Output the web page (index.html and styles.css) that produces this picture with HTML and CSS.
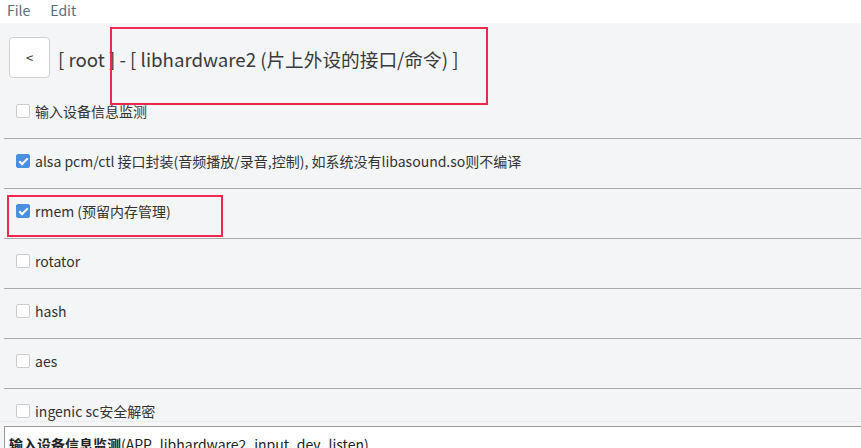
FILE: index.html
```html
<!DOCTYPE html>
<html lang="en">

<head>
    <meta charset="UTF-8">
    <meta name="viewport" content="width=device-width, initial-scale=1.0">
    <title>libhardware2</title>
    <link rel="stylesheet" href="styles.css">
</head>

<body>
    <div class="menubar">
        <span class="menu-item">File</span>
        <span class="menu-item">Edit</span>
    </div>
    <div class="page">
        <div class="header">
            <button class="back-button">&lt;</button>
            <h1 class="title">[ root ] - [ libhardware2 (片上外设的接口/命令) ]</h1>
        </div>
        <div class="option-list">
            <div class="option-row">
                <span class="checkbox"></span>
                <span class="option-label">输入设备信息监测</span>
            </div>
            <div class="option-row">
                <span class="checkbox checked"></span>
                <span class="option-label">alsa pcm/ctl 接口封装(音频播放/录音,控制), 如系统没有libasound.so则不编译</span>
            </div>
            <div class="option-row">
                <span class="checkbox checked"></span>
                <span class="option-label">rmem (预留内存管理)</span>
            </div>
            <div class="option-row">
                <span class="checkbox"></span>
                <span class="option-label">rotator</span>
            </div>
            <div class="option-row">
                <span class="checkbox"></span>
                <span class="option-label">hash</span>
            </div>
            <div class="option-row">
                <span class="checkbox"></span>
                <span class="option-label">aes</span>
            </div>
            <div class="option-row">
                <span class="checkbox"></span>
                <span class="option-label">ingenic sc安全解密</span>
            </div>
        </div>
        <div class="help-panel">
            <div class="help-box"><b>输入设备信息监测</b>(APP_libhardware2_input_dev_listen)</div>
        </div>
    </div>

    <!-- annotation boxes drawn over the screenshot -->
    <div class="mark mark-title"></div>
    <div class="mark mark-rmem"></div>
</body>

</html>
```

FILE: styles.css
```css
html,
body {
    margin: 0;
    padding: 0;
    height: 448px;
    overflow: hidden;
}

body {
    font-family: 'Noto Sans CJK SC', 'Noto Sans', sans-serif;
    color: #333;
    background-color: #f4f5f7;
    position: relative;
    display: flex;
    flex-direction: column;
}

.menubar {
    height: 23px;
    background-color: #fff;
    display: flex;
    align-items: flex-start;
    gap: 20px;
    padding-left: 7px;
    font-size: 14px;
    line-height: 20px;
    color: #5b6b7d;
    flex-shrink: 0;
}

.page {
    flex: 1;
    display: flex;
    flex-direction: column;
    min-height: 0;
}

.header {
    display: flex;
    align-items: flex-start;
    gap: 8px;
    padding: 14px 0 0 9px;
    height: 52px;
    flex-shrink: 0;
}

.back-button {
    width: 41px;
    height: 41px;
    background-color: #fff;
    border: 1px solid #d0d0d0;
    border-radius: 4px;
    font-family: 'Noto Sans CJK SC', sans-serif;
    font-size: 13px;
    color: #333;
    padding: 0;
}

.title {
    margin: 0;
    font-size: 14pt;
    font-weight: normal;
    line-height: 44px;
    color: #3a3a3a;
}

.option-list {
    flex: 1;
    min-height: 0;
    overflow: hidden;
    margin-left: 4px;
}

.option-row {
    display: flex;
    align-items: center;
    gap: 5px;
    height: 20px;
    padding: 12px 0 17px 12px;
    border-bottom: 1px solid #aaa;
    font-size: 14px;
}

.checkbox {
    width: 14px;
    height: 14px;
    box-sizing: border-box;
    border: 1px solid #ccc;
    border-radius: 2px;
    background-color: #fff;
    flex-shrink: 0;
    position: relative;
}

.checkbox.checked {
    background-color: #4a8fe0;
    border-color: #4a8fe0;
}

.checkbox.checked::after {
    content: '';
    position: absolute;
    left: 4px;
    top: 1px;
    width: 3px;
    height: 7px;
    border: solid #fff;
    border-width: 0 2px 2px 0;
    transform: rotate(45deg);
}

.help-panel {
    flex-shrink: 0;
    height: 22px;
    padding: 4px 0 0 4px;
    border-top: 1px dotted #e2e2e2;
}

.help-box {
    background-color: #fff;
    border-top: 1px solid #999;
    border-left: 1px solid #999;
    height: 100%;
    padding: 8px 0 0 4px;
    font-size: 14px;
    line-height: 18px;
    color: #222;
}

.mark {
    position: absolute;
    border: 2px solid #f02850;
    box-sizing: border-box;
}

.mark-title {
    left: 110px;
    top: 27px;
    width: 378px;
    height: 78px;
}

.mark-rmem {
    left: 7px;
    top: 195px;
    width: 216px;
    height: 42px;
}
```
